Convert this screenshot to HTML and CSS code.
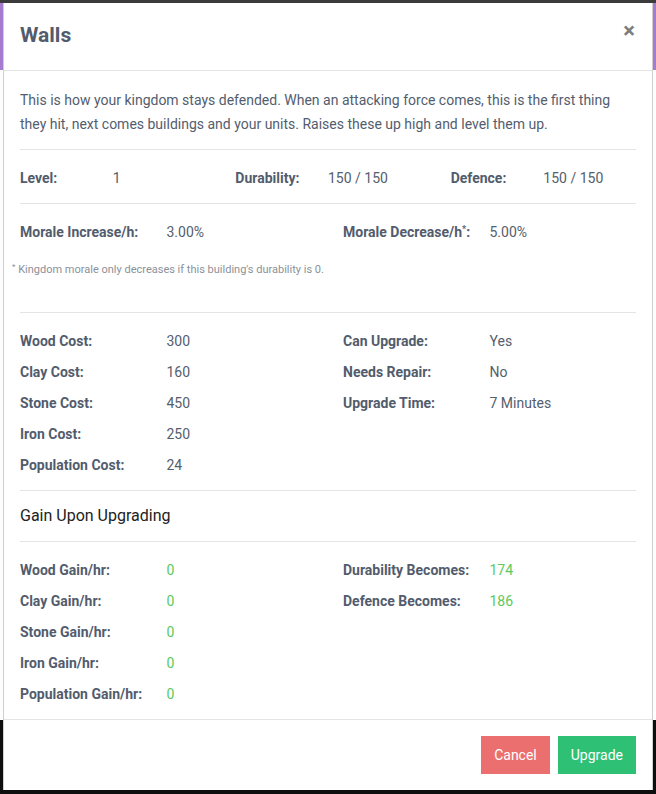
FILE: index.html
```html
<!DOCTYPE html>
<html lang="en">
<head>
<meta charset="utf-8">
<title>Walls</title>
<link rel="stylesheet" href="styles.css">
</head>
<body>
<div class="page">
  <div class="page-topbar"></div>
  <div class="page-header"></div>
  <div class="page-content"></div>
  <div class="page-footer"></div>
</div>

<div class="modal">
  <div class="modal-header">
    <h4 class="modal-title">Walls</h4>
    <span class="close">×</span>
  </div>
  <div class="modal-body">
    <p class="intro">This is how your kingdom stays defended. When an attacking force comes, this is the first thing they hit, next comes buildings and your units. Raises these up high and level them up.</p>
    <hr class="rule rule-first">
    <div class="grid grid-3">
      <div class="pair"><span class="label">Level:</span><span class="value">1</span></div>
      <div class="pair"><span class="label">Durability:</span><span class="value">150 / 150</span></div>
      <div class="pair"><span class="label">Defence:</span><span class="value">150 / 150</span></div>
    </div>
    <hr class="rule">
    <div class="grid grid-2">
      <div class="pair"><span class="label">Morale Increase/h:</span><span class="value">3.00%</span></div>
      <div class="pair"><span class="label">Morale Decrease/h<sup>*</sup>:</span><span class="value">5.00%</span></div>
    </div>
    <p class="footnote"><sup>*</sup> Kingdom morale only decreases if this building's durability is 0.</p>
    <hr class="rule">
    <div class="grid grid-2">
      <div class="list">
        <div class="pair"><span class="label">Wood Cost:</span><span class="value">300</span></div>
        <div class="pair"><span class="label">Clay Cost:</span><span class="value">160</span></div>
        <div class="pair"><span class="label">Stone Cost:</span><span class="value">450</span></div>
        <div class="pair"><span class="label">Iron Cost:</span><span class="value">250</span></div>
        <div class="pair"><span class="label">Population Cost:</span><span class="value">24</span></div>
      </div>
      <div class="list">
        <div class="pair"><span class="label">Can Upgrade:</span><span class="value">Yes</span></div>
        <div class="pair"><span class="label">Needs Repair:</span><span class="value">No</span></div>
        <div class="pair"><span class="label">Upgrade Time:</span><span class="value">7 Minutes</span></div>
      </div>
    </div>
    <hr class="rule">
    <h5 class="section-title">Gain Upon Upgrading</h5>
    <hr class="rule rule-after-title">
    <div class="grid grid-2">
      <div class="list">
        <div class="pair"><span class="label">Wood Gain/hr:</span><span class="value good">0</span></div>
        <div class="pair"><span class="label">Clay Gain/hr:</span><span class="value good">0</span></div>
        <div class="pair"><span class="label">Stone Gain/hr:</span><span class="value good">0</span></div>
        <div class="pair"><span class="label">Iron Gain/hr:</span><span class="value good">0</span></div>
        <div class="pair"><span class="label">Population Gain/hr:</span><span class="value good">0</span></div>
      </div>
      <div class="list">
        <div class="pair"><span class="label">Durability Becomes:</span><span class="value good">174</span></div>
        <div class="pair"><span class="label">Defence Becomes:</span><span class="value good">186</span></div>
      </div>
    </div>
  </div>
  <div class="modal-footer">
    <button class="btn btn-danger">Cancel</button>
    <button class="btn btn-success">Upgrade</button>
  </div>
</div>
</body>
</html>
```

FILE: styles.css
```css
* { box-sizing: border-box; }

html, body {
  margin: 0;
  padding: 0;
}

body {
  width: 656px;
  height: 794px;
  overflow: hidden;
  position: relative;
  font-family: Roboto, "Helvetica Neue", Arial, sans-serif;
  font-size: 14px;
  color: #525c6d;
  background: #0e0e0e;
}

/* page behind the modal */
.page {
  display: flex;
  flex-direction: column;
  height: 794px;
}
.page-topbar { height: 3px; background: #3b3b3b; }
.page-header { height: 67px; background: #a67ccf; }
.page-content { height: 650px; background: #fdfdfd; }
.page-footer { flex: 1; background: #0e0e0e; }

/* modal dialog overlaying the page */
.modal {
  position: absolute;
  left: 3px;
  top: 3px;
  width: 650px;
  background: #fff;
  border-left: 1px solid #cfcfcf;
  border-right: 1px solid #cfcfcf;
}

.modal-header {
  display: flex;
  justify-content: space-between;
  align-items: flex-start;
  padding: 15px 16px 17px;
  border-bottom: 1px solid #e3e3e3;
}

.modal-title {
  margin: 0;
  font-size: 21px;
  line-height: 35px;
  font-weight: 700;
  color: #525c6d;
}

.close {
  font-size: 22px;
  line-height: 22px;
  font-weight: 700;
  color: #7d7d7d;
  margin-top: 2px;
  margin-right: 1px;
}

.modal-body {
  display: flex;
  flex-direction: column;
  padding: 17px 16px 16px;
}

.intro {
  margin: 0;
  line-height: 24px;
  color: #535d6e;
}

.rule {
  width: 100%;
  border: 0;
  border-top: 1px solid #e4e4e4;
  margin: 16px 0;
}
.rule-first { margin-top: 13px; }
.rule-after-title { margin-top: 13px; }

.grid {
  display: grid;
  column-gap: 30px;
  margin: 2px 0 -2px;
}
.grid-2 { grid-template-columns: 1fr 1fr; }
.grid-3 { grid-template-columns: 1fr 1fr 1fr; }

.list {
  display: flex;
  flex-direction: column;
  gap: 10px;
}

.pair {
  display: grid;
  grid-template-columns: 1fr 1fr;
  line-height: 21px;
}

.label {
  font-weight: 700;
  color: #525c6d;
  white-space: nowrap;
}

.value {
  color: #555e6d;
}

.good { color: #5cc95c; }

sup {
  font-size: 9px;
  line-height: 0;
  vertical-align: 5px;
}

.footnote {
  margin: 21px 0 18px -8px;
  font-size: 11px;
  line-height: 16px;
  color: #8b919a;
}
.footnote sup {
  font-size: 8px;
  vertical-align: 4px;
}

.section-title {
  margin: -3px 0 0;
  font-size: 16px;
  line-height: 24px;
  font-weight: 400;
  color: #222;
}

.modal-footer {
  display: flex;
  justify-content: flex-end;
  gap: 8px;
  padding: 16px 16px;
  border-top: 1px solid #e4e4e4;
}

.btn {
  height: 38px;
  padding: 0 13px;
  border: 0;
  border-radius: 0;
  font-family: Roboto, "Helvetica Neue", Arial, sans-serif;
  font-size: 14px;
  color: #fff;
}
.btn-danger { background: #eb6f6f; }
.btn-success { background: #2ec176; }
```
